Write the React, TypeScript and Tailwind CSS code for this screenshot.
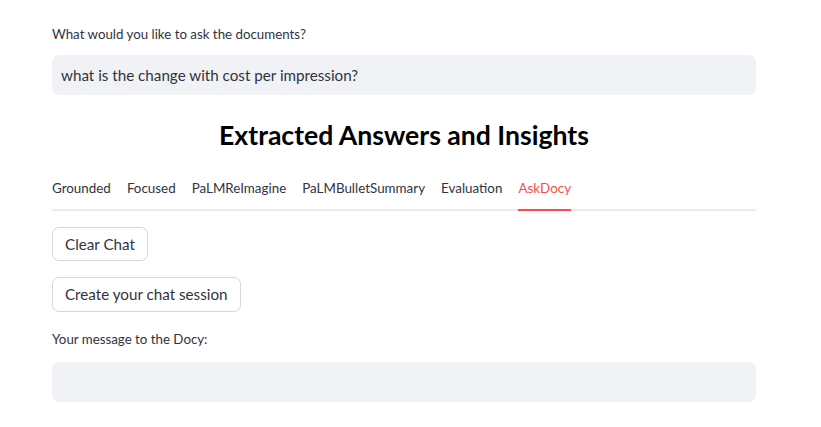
const tabs = ["Grounded", "Focused", "PaLMReImagine", "PaLMBulletSummary", "Evaluation", "AskDocy"]

export default function App() {
	return (
		<div className="min-h-[427px] bg-white text-[#31333f] font-['Lato','Noto_Sans',sans-serif]">
			<div className="ml-[52px] w-[704px] pt-[24px]">
				<label className="block text-[13.3px] leading-[20px] mb-[11px]">What would you like to ask the documents?</label>
				<div className="h-[40px] rounded-[7px] bg-[#f0f2f6] px-[9px] flex items-center text-[15.2px]">
					what is the change with cost per impression?
				</div>

				<h1 className="mt-[22px] text-center text-[26.6px] font-bold leading-[36px] text-black">
					Extracted Answers and Insights
				</h1>

				<div className="mt-[25px] flex gap-[16px] border-b-2 border-[#eaebee] text-[13.4px]">
					{tabs.map((t) => (
						<div
							key={t}
							className={
								t === "AskDocy"
									? "pb-[11px] -mb-[2px] border-b-2 border-[#ff4b4b] text-[#ff4b4b]"
									: "pb-[11px]"
							}
						>
							{t}
						</div>
					))}
				</div>

				<div className="mt-[16px] flex flex-col items-start gap-[16px]">
					<button className="h-[34px] px-[12px] rounded-[7px] border border-[#d6d6d9] bg-white text-[15.2px]">
						Clear Chat
					</button>
					<button className="h-[35px] px-[12px] rounded-[7px] border border-[#d6d6d9] bg-white text-[15.2px]">
						Create your chat session
					</button>
				</div>

				<label className="mt-[17px] block text-[13.3px] leading-[20px] mb-[13px]">Your message to the Docy:</label>
				<div className="h-[40px] rounded-[7px] bg-[#f0f2f6]"></div>
			</div>
		</div>
	)
}
